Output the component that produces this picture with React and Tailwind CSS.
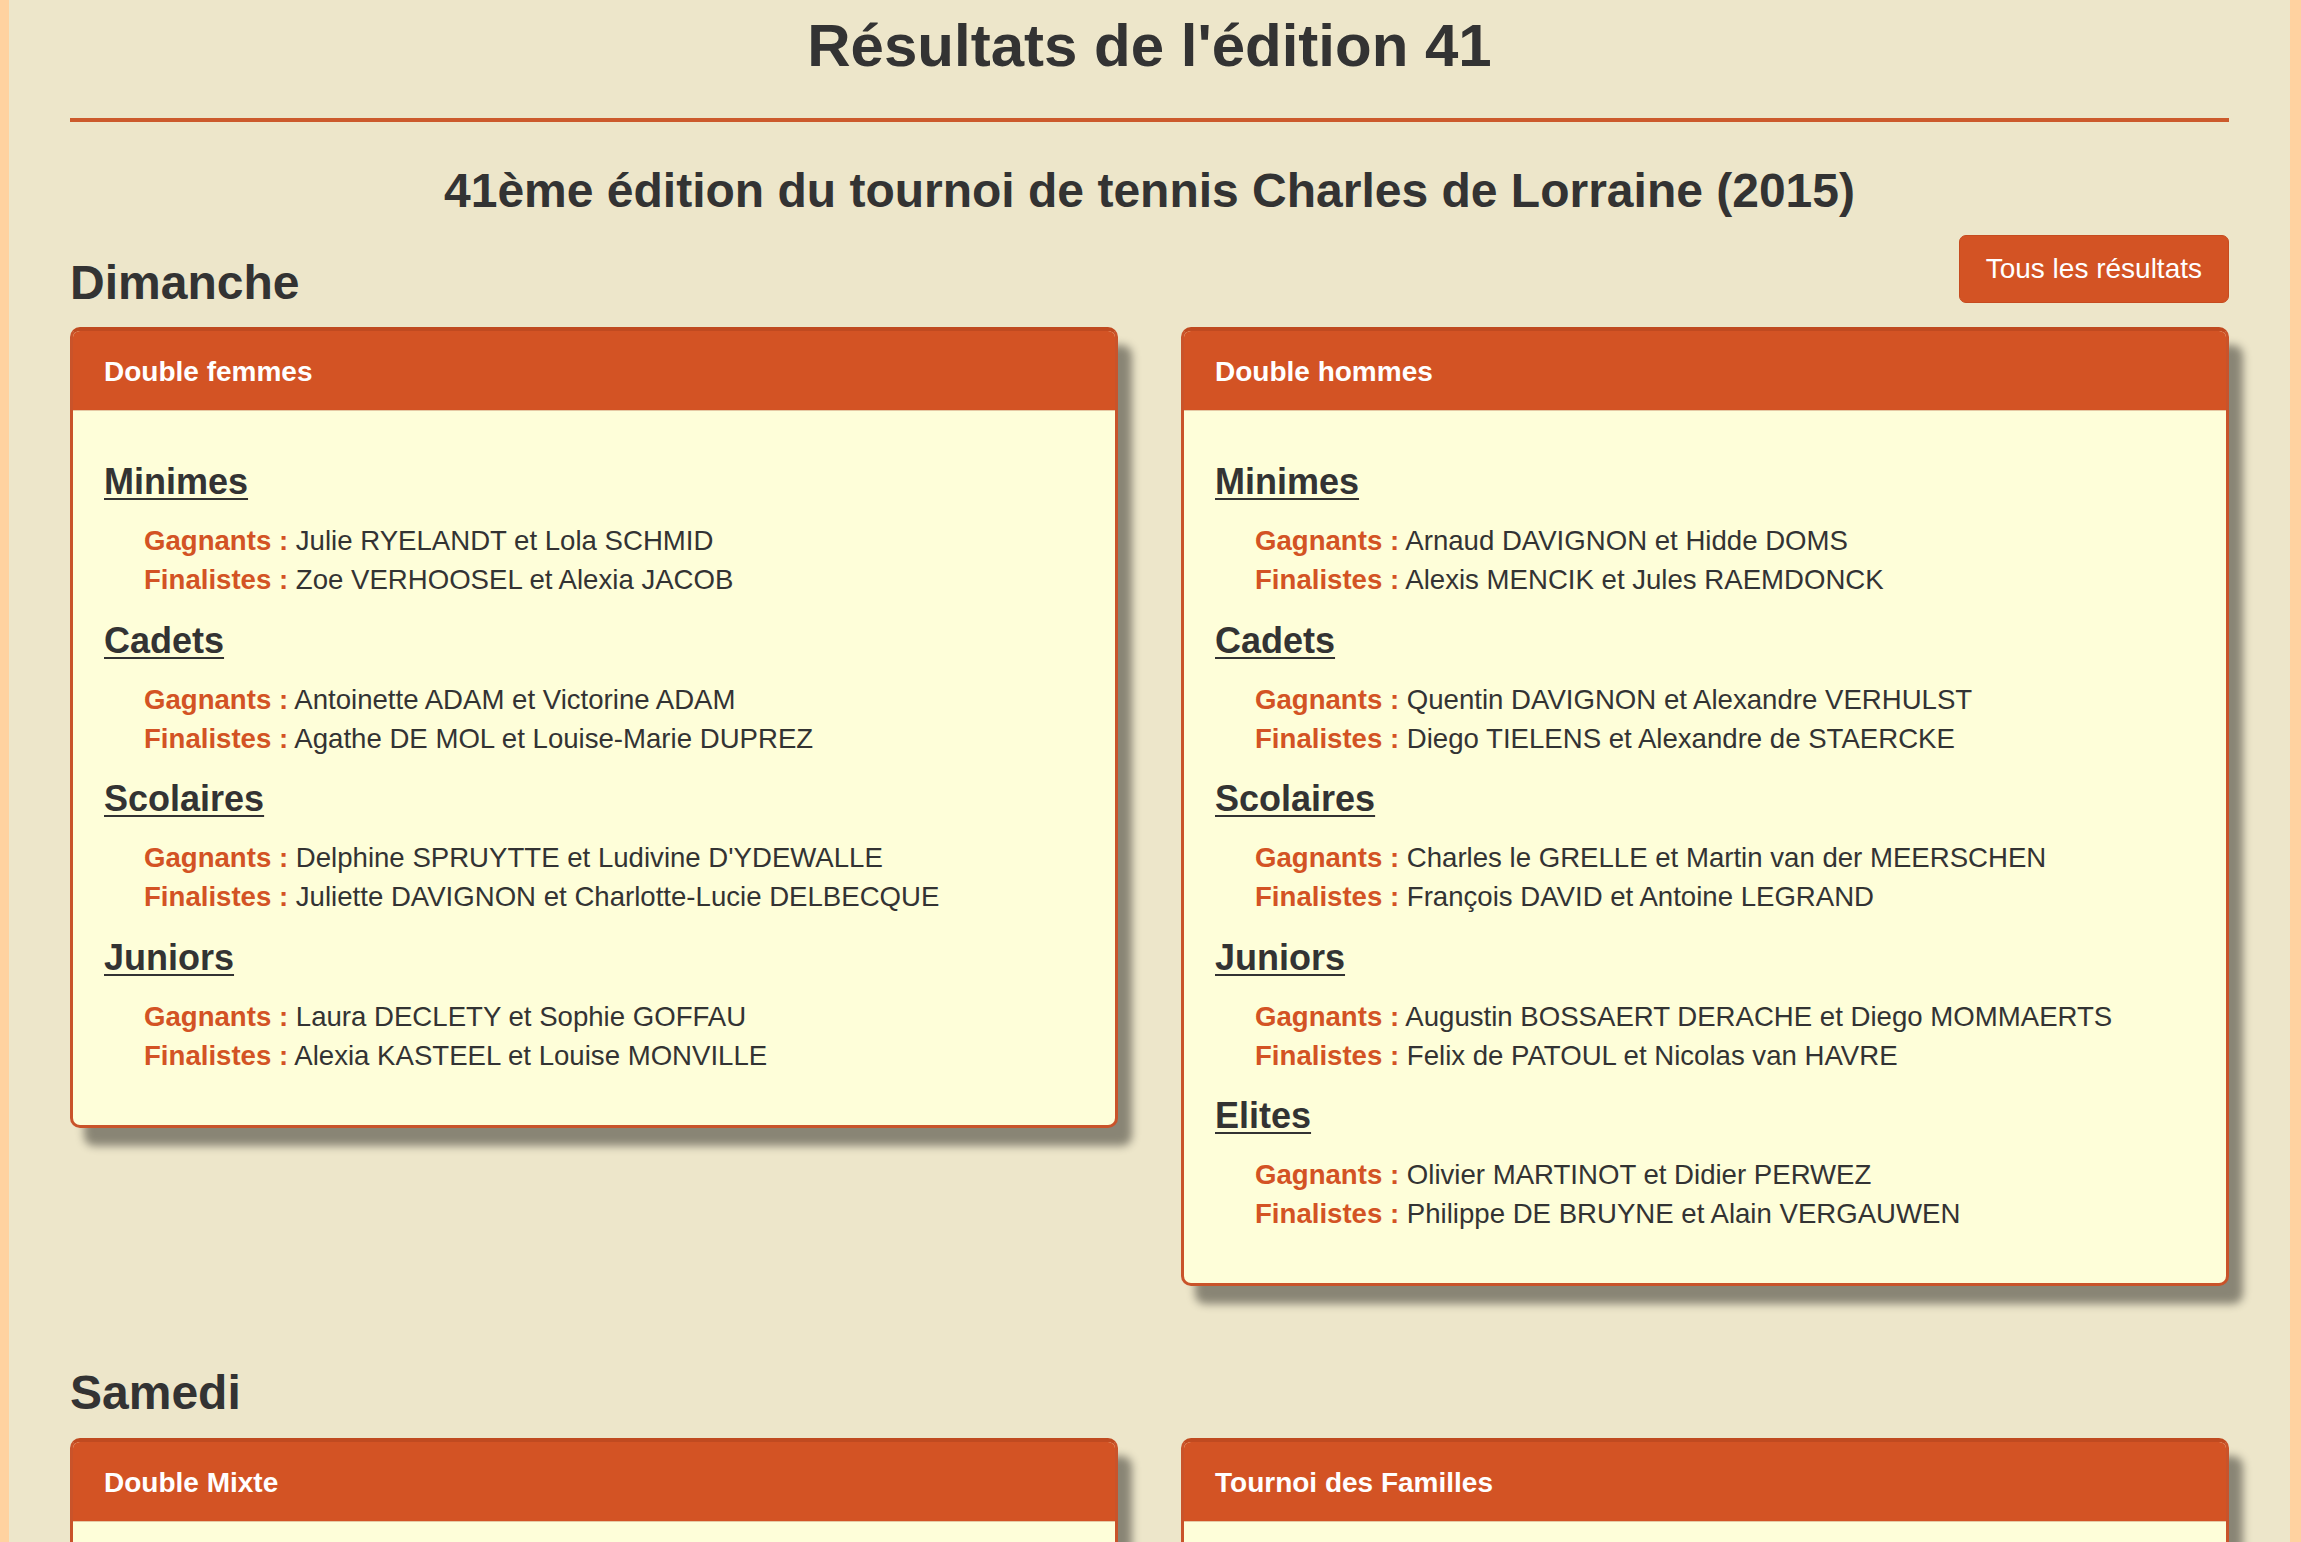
const dimanche = [
  {
    title: "Double femmes",
    groups: [
      { name: "Minimes", winners: "Julie RYELANDT et Lola SCHMID", finalists: "Zoe VERHOOSEL et Alexia JACOB" },
      { name: "Cadets", winners: "Antoinette ADAM et Victorine ADAM", finalists: "Agathe DE MOL et Louise-Marie DUPREZ" },
      { name: "Scolaires", winners: "Delphine SPRUYTTE et Ludivine D'YDEWALLE", finalists: "Juliette DAVIGNON et Charlotte-Lucie DELBECQUE" },
      { name: "Juniors", winners: "Laura DECLETY et Sophie GOFFAU", finalists: "Alexia KASTEEL et Louise MONVILLE" },
    ],
  },
  {
    title: "Double hommes",
    groups: [
      { name: "Minimes", winners: "Arnaud DAVIGNON et Hidde DOMS", finalists: "Alexis MENCIK et Jules RAEMDONCK" },
      { name: "Cadets", winners: "Quentin DAVIGNON et Alexandre VERHULST", finalists: "Diego TIELENS et Alexandre de STAERCKE" },
      { name: "Scolaires", winners: "Charles le GRELLE et Martin van der MEERSCHEN", finalists: "François DAVID et Antoine LEGRAND" },
      { name: "Juniors", winners: "Augustin BOSSAERT DERACHE et Diego MOMMAERTS", finalists: "Felix de PATOUL et Nicolas van HAVRE" },
      { name: "Elites", winners: "Olivier MARTINOT et Didier PERWEZ", finalists: "Philippe DE BRUYNE et Alain VERGAUWEN" },
    ],
  },
];

const samedi = [
  { title: "Double Mixte", groups: [] },
  { title: "Tournoi des Familles", groups: [] },
];

const Panel = ({ title, groups }) => (
  <div className="rounded-[10px] border-[3px] border-t-[4px] border-[#c9532a] border-t-[#c04a20] shadow-[14px_18px_8px_rgba(0,0,0,0.42)] overflow-hidden bg-[#fefed9]">
    <div className="bg-[#d35324] px-[31px] pt-[25px] pb-[23px] border-b border-[#e6c9a4]">
      <h3 className="text-[28px] leading-[31px] font-bold text-white">{title}</h3>
    </div>
    <div className="px-[31px] pt-[52px] pb-[50px] min-h-[300px]">
      {groups.map((g, i) => (
        <div key={g.name} className={i > 0 ? "mt-[22.5px]" : ""}>
          <h4 className="text-[36px] leading-[38px] font-bold text-[#333] underline decoration-2 underline-offset-[4px]">
            {g.name}
          </h4>
          <div className="mt-[20px] pl-[40px] text-[27.6px] leading-[39px] text-[#333]">
            <p>
              <span className="font-bold text-[#d35324]">Gagnants :</span> {g.winners}
            </p>
            <p>
              <span className="font-bold text-[#d35324]">Finalistes :</span> {g.finalists}
            </p>
          </div>
        </div>
      ))}
    </div>
  </div>
);

export default function App() {
  return (
    <div className="min-h-screen flex bg-[#ede6ca] font-['Liberation_Sans',Arial,sans-serif] text-[#333]">
      {/* left edge */}
      <div className="w-[9px] shrink-0 bg-[#ffd2a0]" />

      <main className="flex-1 px-[61px]">
        <h1 className="pt-[13px] text-[60px] leading-[66px] font-bold text-center">Résultats de l'édition 41</h1>
        <hr className="mt-[39px] border-0 h-[4px] bg-[#cc5a2c]" />
        <h2 className="mt-[43px] text-[48px] leading-[52px] font-bold text-center">
          41ème édition du tournoi de tennis Charles de Lorraine (2015)
        </h2>

        {/* Dimanche */}
        <div className="flex justify-between items-start">
          <h2 className="mt-[40px] text-[48px] leading-[52px] font-bold">Dimanche</h2>
          <button className="mt-[18px] h-[68px] px-[26px] rounded-[7px] bg-[#d35324] border border-[#c64b1f] text-white text-[28px]">
            Tous les résultats
          </button>
        </div>
        <div className="mt-[18px] grid grid-cols-2 gap-[63px] items-start">
          {dimanche.map((p) => (
            <Panel key={p.title} {...p} />
          ))}
        </div>

        {/* Samedi */}
        <h2 className="mt-[81px] text-[48px] leading-[52px] font-bold">Samedi</h2>
        <div className="mt-[19px] grid grid-cols-2 gap-[63px] items-start pb-10">
          {samedi.map((p) => (
            <Panel key={p.title} {...p} />
          ))}
        </div>
      </main>

      {/* right edge */}
      <div className="w-[11px] shrink-0 bg-[#ffd2a0]" />
    </div>
  );
}
